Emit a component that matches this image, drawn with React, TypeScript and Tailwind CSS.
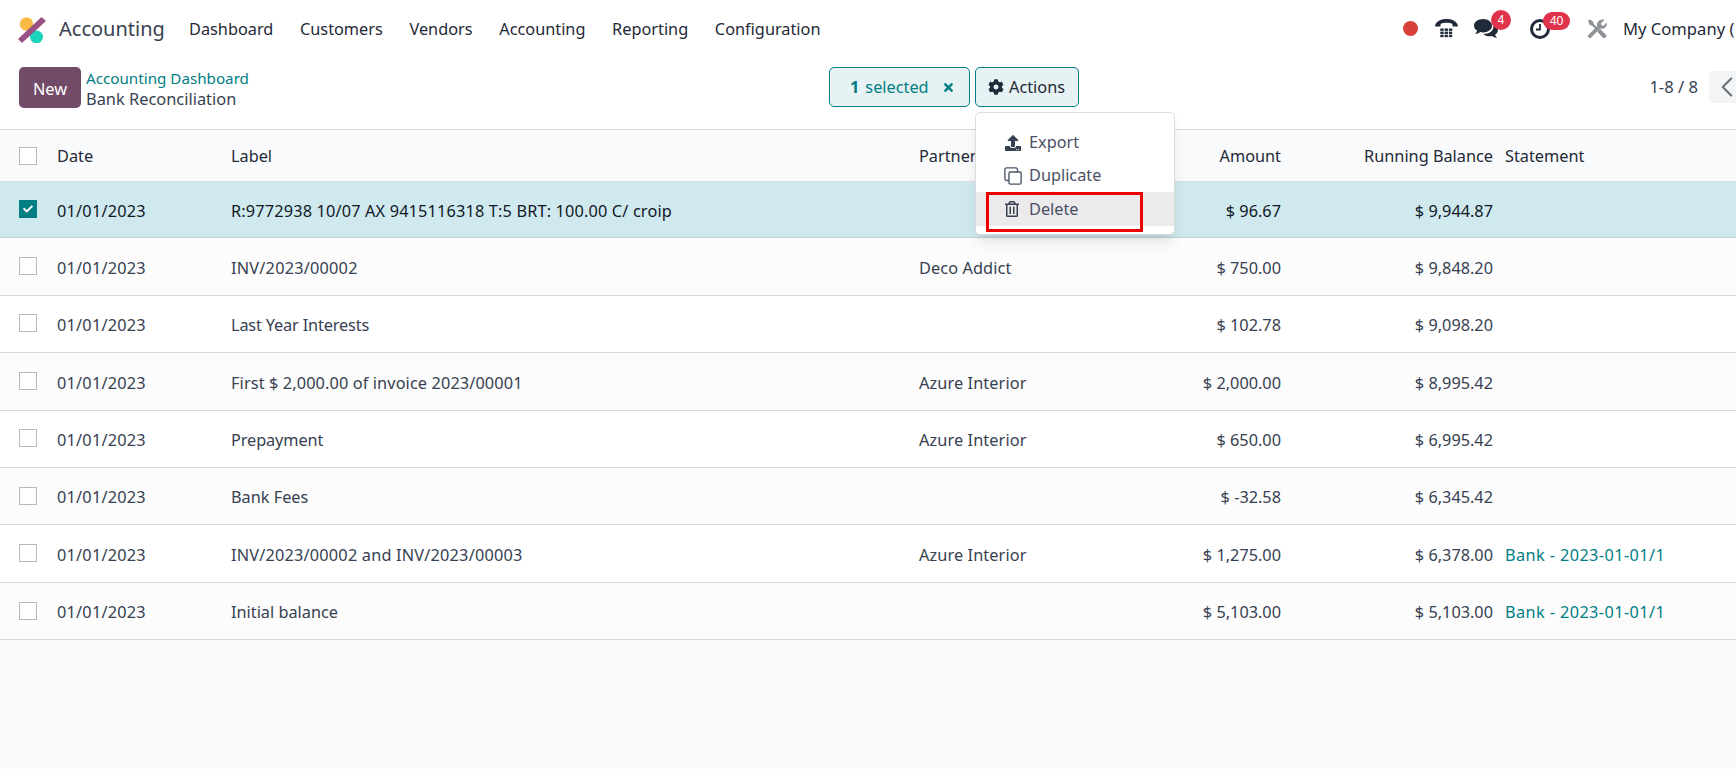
import { FaCheck, FaCog, FaRegTrashAlt, FaTimes, FaUpload } from "react-icons/fa";
import { ChevronLeft } from "lucide-react";

const nav = ["Dashboard", "Customers", "Vendors", "Accounting", "Reporting", "Configuration"];

type Row = { label: string; track: string; partner?: string; amount: string; balance: string; statement?: string };
const rows: Row[] = [
  { label: "R:9772938 10/07 AX 9415116318 T:5 BRT: 100.00 C/ croip", track: "tracking-[0.16px]", amount: "$ 96.67", balance: "$ 9,944.87" },
  { label: "INV/2023/00002", track: "tracking-[0.22px]", partner: "Deco Addict", amount: "$ 750.00", balance: "$ 9,848.20" },
  { label: "Last Year Interests", track: "tracking-[-0.15px]", amount: "$ 102.78", balance: "$ 9,098.20" },
  { label: "First $ 2,000.00 of invoice 2023/00001", track: "tracking-[0.12px]", partner: "Azure Interior", amount: "$ 2,000.00", balance: "$ 8,995.42" },
  { label: "Prepayment", track: "tracking-[-0.1px]", partner: "Azure Interior", amount: "$ 650.00", balance: "$ 6,995.42" },
  { label: "Bank Fees", track: "", amount: "$ -32.58", balance: "$ 6,345.42" },
  { label: "INV/2023/00002 and INV/2023/00003", track: "tracking-[0.2px]", partner: "Azure Interior", amount: "$ 1,275.00", balance: "$ 6,378.00", statement: "Bank - 2023-01-01/1" },
  { label: "Initial balance", track: "", amount: "$ 5,103.00", balance: "$ 5,103.00", statement: "Bank - 2023-01-01/1" },
];

const cols = "grid grid-cols-[57px_174px_688px_150px_212px_212px_1fr] items-center";

function Phone() {
  return (
    <svg viewBox="0 0 24 20" className="w-[23px] h-[19px]" fill="#1f2937">
      <path d="M0 6.500C2 1.500 7 0 12 0s10 1.500 12 6.500c.2.800-.2 1.500-1 1.500h-3.500c-.8 0-1.300-.5-1.300-1.300V5.200C16.500 4.200 14 4 12 4s-4.500.2-6.200 1.200v1.500c0 .8-.5 1.300-1.300 1.300H1C.2 8-.2 7.300 0 6.500Z" />
      {[5.500, 10, 14.500].map((x) => [10, 13.300, 16.600].map((y) => <rect key={`${x}-${y}`} x={x} y={y} width="3.500" height="2.500" />))}
    </svg>
  );
}

function Chat() {
  return (
    <svg viewBox="0 0 24 20" className="w-[24px] h-[20px]" fill="#1f2937">
      <path d="M9 0c5 0 9 2.900 9 6.700s-4 6.700-9 6.700c-.9 0-1.800-.1-2.600-.3C4.900 14.300 3 15 1 15.200c1-1 1.800-2.300 2.100-3.600C1.200 10.400 0 8.700 0 6.700 0 2.900 4 0 9 0Z" />
      <path d="M19.500 5.500c2.700 1 4.500 3 4.500 5.400 0 1.900-1.100 3.500-2.900 4.600.3 1.400 1 2.600 1.900 3.500-1.900-.2-3.500-1-4.800-2-.8.2-1.600.3-2.500.3-2.600 0-4.900-.9-6.300-2.300 5.600 0 11-2.700 10.100-9.500Z" />
    </svg>
  );
}

function Clock() {
  return (
    <svg viewBox="0 0 20 20" className="w-[20px] h-[20px]" fill="none" stroke="#1f2937">
      <circle cx="10" cy="10" r="8.500" strokeWidth="3" />
      <path d="M10 5v5.500H6" strokeWidth="1.800" />
    </svg>
  );
}

function Tools() {
  return (
    <svg viewBox="0 0 20 20" className="w-[20px] h-[20px]" fill="#8f9399">
      <path d="M1 1.500 3 .5l3.200 2.300.3 2 6 6-1.700 1.700-6-6-2-.3Z" />
      <path d="M11 12l1.500-1.500 1-.2 5.500 5.500c.6.700.6 1.700 0 2.300l-.7.700c-.6.600-1.700.6-2.300 0l-5.300-5.500Z" />
      <path d="M1.300 16 10.200 7.200c-.8-2.800 1.200-6.700 5.500-6.700.7 0 1.200.1 1.800.3L14 4.300l.5 2 2 .5 3.400-3.400c.7 4-3 7.400-6.800 6.200l-8.900 8.900c-.7.700-1.800.7-2.500 0l-.4-.4c-.7-.7-.7-1.600 0-2.300Z" />
    </svg>
  );
}

function Clone() {
  return (
    <svg viewBox="0 0 20 20" className="w-[18px] h-[18px]" fill="none" stroke="#4a5568" strokeWidth="1.500">
      <rect x="5.500" y="5.500" width="13.500" height="13.500" rx="1.500" />
      <path d="M5.500 15H3a2 2 0 0 1-2-2V3a2 2 0 0 1 2-2h10a2 2 0 0 1 2 2v2.500" />
    </svg>
  );
}

function Logo() {
  return (
    <svg viewBox="0 0 28 26" className="w-[28px] h-[26px]">
      <circle cx="8.500" cy="7" r="6.700" fill="#fbb945" />
      <circle cx="18.500" cy="20" r="6.500" fill="#1ad3bb" />
      <path d="M0 22 L23.500 0 L28 4 L4 26 Z" fill="#985184" />
    </svg>
  );
}

export default function App() {
  return (
    <div className="h-[769px] w-[1736px] overflow-hidden bg-white text-[#374151] font-['Noto_Sans','Open_Sans',sans-serif] text-[16.300px] flex flex-col">
      <header className="h-[58px] flex items-center">
        <div className="ml-[18px] w-[41px] pt-[2px]"><Logo /></div>
        <span className="text-[20px] text-[#374151] w-[130px]">Accounting</span>
        <nav className="flex gap-[26.700px] text-[#1f2937]">
          {nav.map((n) => <span key={n}>{n}</span>)}
        </nav>
        <div className="ml-auto flex items-center whitespace-nowrap">
          <span className="w-[15px] h-[15px] rounded-full bg-[#d63f3a] mr-[17px]" />
          <span className="mr-[16px]"><Phone /></span>
          <span className="relative mr-[32px]">
            <Chat />
            <span className="absolute -top-[9px] left-[17px] w-[20px] h-[20px] rounded-full bg-[#e0334c] text-white text-[12px] flex items-center justify-center">4</span>
          </span>
          <span className="relative mr-[37px]">
            <Clock />
            <span className="absolute -top-[7px] left-[13px] w-[27px] h-[18px] rounded-full bg-[#e0334c] text-white text-[12px] flex items-center justify-center">40</span>
          </span>
          <span className="mr-[16px]"><Tools /></span>
          <span className="w-[113px] text-[16.600px] text-[#1f2937]">My Company (</span>
        </div>
      </header>

      <div className="h-[71px] relative flex items-start pt-[9px]">
        <button className="ml-[19px] w-[62px] h-[41px] pt-[3px] rounded-[5px] bg-[#714b67] text-white text-[16.300px]">New</button>
        <div className="ml-[5px] flex flex-col leading-[21px]">
          <span className="text-[#017e84] text-[15.200px] mt-[1px]">Accounting Dashboard</span>
          <span className="text-[16.400px] -mt-[1px]">Bank Reconciliation</span>
        </div>
        <div className="absolute left-[829px] top-[9px] flex gap-[5px]">
          <div className="w-[141px] h-[40px] rounded-[5px] border border-[#017e84] bg-[#e6f2f3] text-[#017e84] flex items-center pl-[20px]">
            <b className="font-bold mr-[6px]">1</b>selected
            <FaTimes className="ml-[13px] w-[13px] h-[13px]" />
          </div>
          <div className="w-[104px] h-[40px] rounded-[5px] border border-[#017e84] bg-[#e6f2f3] text-[#1f2937] flex items-center pl-[12px]">
            <FaCog className="w-[16px] h-[16px] mr-[5px]" />Actions
          </div>
        </div>
        <div className="ml-auto flex items-center mt-[4px]">
          <span className="mr-[11px] text-[16.600px] text-[#374151]">1-8 / 8</span>
          <div className="w-[27px] h-[32px] rounded-l-[5px] bg-[#f3f4f6] flex items-center pl-[1px] overflow-hidden">
            <ChevronLeft className="w-[34px] h-[34px] shrink-0 text-[#6b7280]" strokeWidth={1.500} />
          </div>
        </div>
      </div>

      <main className="relative flex-1 bg-[#f9fafb]">
        <div className={`${cols} h-[53px] border-y border-[#d8dadd] text-[#1f2937]`}>
          <span className="ml-[19px] w-[18px] h-[18px] border border-[#b8b8b8] bg-white" />
          <span className="pt-[1px]">Date</span><span className="pt-[1px]">Label</span><span className="pt-[1px]">Partner</span>
          <span className="pt-[1px] text-right">Amount</span>
          <span className="pt-[1px] text-right">Running Balance</span>
          <span className="pt-[1px] pl-3">Statement</span>
        </div>
        {rows.map((r, i) => (
          <div key={r.label} className={`${cols} border-b ${i === 0 ? "h-[56.300px] bg-[#d0e9ee] border-[#bcd6dc] text-[#111827]" : i % 2 === 1 ? "h-[57.430px] bg-[#fcfcfc] border-[#d8dadd]" : "h-[57.430px] bg-white border-[#d8dadd]"}`}>
            {i === 0 ? (
              <span className="ml-[19px] w-[18px] h-[18px] bg-[#017e84] flex items-center justify-center -mt-[2px]"><FaCheck className="w-[10px] h-[10px] text-white" /></span>
            ) : (
              <span className="ml-[19px] w-[18px] h-[18px] border border-[#b8b8b8] bg-white -mt-[1px]" />
            )}
            <span className="pt-[3px] tracking-[0.22px]">01/01/2023</span>
            <span className={`pt-[3px] ${r.track}`}>{r.label}</span>
            <span className="pt-[3px] tracking-[0.1px]">{r.partner}</span>
            <span className="pt-[3px] text-right">{r.amount}</span>
            <span className="pt-[3px] text-right">{r.balance}</span>
            <span className="pt-[3px] pl-3 text-[#017e84] whitespace-nowrap tracking-[0.4px]">{r.statement}</span>
          </div>
        ))}
        <div className="absolute left-[975px] -top-[17px] w-[200px] h-[123px] rounded-[5px] border border-[#dcdcdc] bg-white shadow-lg pt-[13px] text-[#4a4f63]">
          <div className="h-[33px] flex items-center pl-[28px]"><FaUpload className="w-[18px] h-[16px] mr-[7px] text-[#374151]" />Export</div>
          <div className="h-[33px] flex items-center pl-[28px]"><span className="mr-[7px]"><Clone /></span>Duplicate</div>
          <div className="relative h-[34px] bg-[#ebebeb] flex items-center pl-[29px]">
            <FaRegTrashAlt className="w-[14px] h-[16px] mr-[10px] text-[#374151]" />Delete
            <span className="absolute left-[10px] top-0 w-[157px] h-[40px] border-[3px] border-[#ee0000]" />
          </div>
        </div>
      </main>
    </div>
  );
}
